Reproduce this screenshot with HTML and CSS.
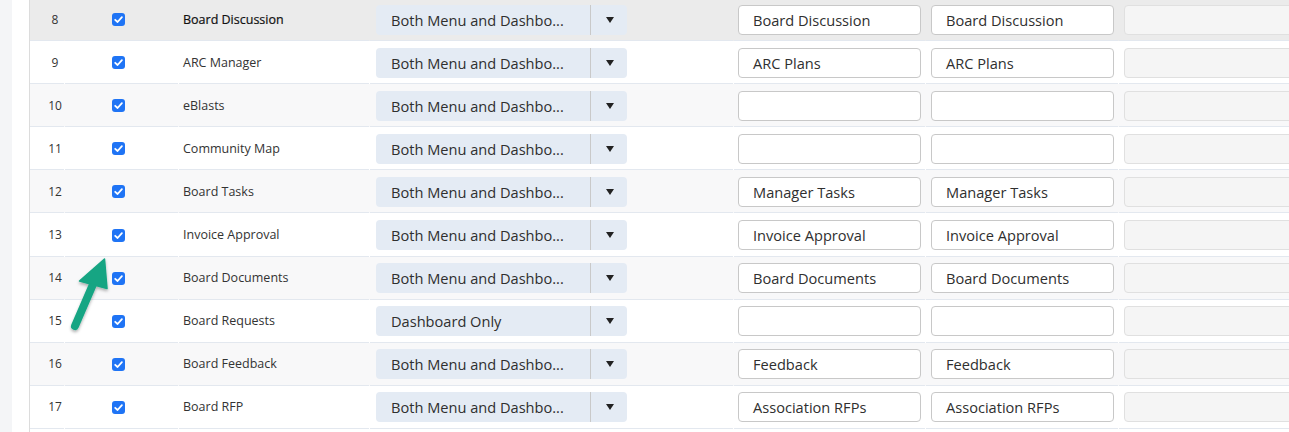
FILE: index.html
```html
<!DOCTYPE html>
<html>
<head>
<meta charset="utf-8">
<link rel="stylesheet" href="styles.css">
</head>
<body>
<div class="page">
  <aside class="side"></aside>
  <div class="gutter"></div>
  <main class="main">
    <div class="rows">
      <div class="row hover">
        <div class="c num">8</div>
        <div class="c chk"><span class="cb"><svg viewBox="0 0 13 13"><path d="M3.2 6.8 L5.6 9 L9.9 4.2"/></svg></span></div>
        <div class="c name strong">Board Discussion</div>
        <div class="c sel"><div class="select"><span class="stext">Both Menu and Dashbo...</span><span class="sbtn"><i class="tri"></i></span></div></div>
        <div class="c inp"><div class="field">Board Discussion</div></div>
        <div class="c inp"><div class="field">Board Discussion</div></div>
        <div class="c inp"><div class="field off"></div></div>
      </div>
      <div class="row">
        <div class="c num">9</div>
        <div class="c chk"><span class="cb"><svg viewBox="0 0 13 13"><path d="M3.2 6.8 L5.6 9 L9.9 4.2"/></svg></span></div>
        <div class="c name">ARC Manager</div>
        <div class="c sel"><div class="select"><span class="stext">Both Menu and Dashbo...</span><span class="sbtn"><i class="tri"></i></span></div></div>
        <div class="c inp"><div class="field">ARC Plans</div></div>
        <div class="c inp"><div class="field">ARC Plans</div></div>
        <div class="c inp"><div class="field off"></div></div>
      </div>
      <div class="row alt">
        <div class="c num">10</div>
        <div class="c chk"><span class="cb"><svg viewBox="0 0 13 13"><path d="M3.2 6.8 L5.6 9 L9.9 4.2"/></svg></span></div>
        <div class="c name">eBlasts</div>
        <div class="c sel"><div class="select"><span class="stext">Both Menu and Dashbo...</span><span class="sbtn"><i class="tri"></i></span></div></div>
        <div class="c inp"><div class="field"></div></div>
        <div class="c inp"><div class="field"></div></div>
        <div class="c inp"><div class="field off"></div></div>
      </div>
      <div class="row">
        <div class="c num">11</div>
        <div class="c chk"><span class="cb"><svg viewBox="0 0 13 13"><path d="M3.2 6.8 L5.6 9 L9.9 4.2"/></svg></span></div>
        <div class="c name">Community Map</div>
        <div class="c sel"><div class="select"><span class="stext">Both Menu and Dashbo...</span><span class="sbtn"><i class="tri"></i></span></div></div>
        <div class="c inp"><div class="field"></div></div>
        <div class="c inp"><div class="field"></div></div>
        <div class="c inp"><div class="field off"></div></div>
      </div>
      <div class="row alt">
        <div class="c num">12</div>
        <div class="c chk"><span class="cb"><svg viewBox="0 0 13 13"><path d="M3.2 6.8 L5.6 9 L9.9 4.2"/></svg></span></div>
        <div class="c name">Board Tasks</div>
        <div class="c sel"><div class="select"><span class="stext">Both Menu and Dashbo...</span><span class="sbtn"><i class="tri"></i></span></div></div>
        <div class="c inp"><div class="field">Manager Tasks</div></div>
        <div class="c inp"><div class="field">Manager Tasks</div></div>
        <div class="c inp"><div class="field off"></div></div>
      </div>
      <div class="row">
        <div class="c num">13</div>
        <div class="c chk"><span class="cb"><svg viewBox="0 0 13 13"><path d="M3.2 6.8 L5.6 9 L9.9 4.2"/></svg></span></div>
        <div class="c name">Invoice Approval</div>
        <div class="c sel"><div class="select"><span class="stext">Both Menu and Dashbo...</span><span class="sbtn"><i class="tri"></i></span></div></div>
        <div class="c inp"><div class="field">Invoice Approval</div></div>
        <div class="c inp"><div class="field">Invoice Approval</div></div>
        <div class="c inp"><div class="field off"></div></div>
      </div>
      <div class="row alt">
        <div class="c num">14</div>
        <div class="c chk"><span class="cb"><svg viewBox="0 0 13 13"><path d="M3.2 6.8 L5.6 9 L9.9 4.2"/></svg></span></div>
        <div class="c name">Board Documents</div>
        <div class="c sel"><div class="select"><span class="stext">Both Menu and Dashbo...</span><span class="sbtn"><i class="tri"></i></span></div></div>
        <div class="c inp"><div class="field">Board Documents</div></div>
        <div class="c inp"><div class="field">Board Documents</div></div>
        <div class="c inp"><div class="field off"></div></div>
      </div>
      <div class="row">
        <div class="c num">15</div>
        <div class="c chk"><span class="cb"><svg viewBox="0 0 13 13"><path d="M3.2 6.8 L5.6 9 L9.9 4.2"/></svg></span></div>
        <div class="c name">Board Requests</div>
        <div class="c sel"><div class="select"><span class="stext">Dashboard Only</span><span class="sbtn"><i class="tri"></i></span></div></div>
        <div class="c inp"><div class="field"></div></div>
        <div class="c inp"><div class="field"></div></div>
        <div class="c inp"><div class="field off"></div></div>
      </div>
      <div class="row alt">
        <div class="c num">16</div>
        <div class="c chk"><span class="cb"><svg viewBox="0 0 13 13"><path d="M3.2 6.8 L5.6 9 L9.9 4.2"/></svg></span></div>
        <div class="c name">Board Feedback</div>
        <div class="c sel"><div class="select"><span class="stext">Both Menu and Dashbo...</span><span class="sbtn"><i class="tri"></i></span></div></div>
        <div class="c inp"><div class="field">Feedback</div></div>
        <div class="c inp"><div class="field">Feedback</div></div>
        <div class="c inp"><div class="field off"></div></div>
      </div>
      <div class="row">
        <div class="c num">17</div>
        <div class="c chk"><span class="cb"><svg viewBox="0 0 13 13"><path d="M3.2 6.8 L5.6 9 L9.9 4.2"/></svg></span></div>
        <div class="c name">Board RFP</div>
        <div class="c sel"><div class="select"><span class="stext">Both Menu and Dashbo...</span><span class="sbtn"><i class="tri"></i></span></div></div>
        <div class="c inp"><div class="field">Association RFPs</div></div>
        <div class="c inp"><div class="field">Association RFPs</div></div>
        <div class="c inp"><div class="field off"></div></div>
      </div>
    </div>
  </main>
</div>
<svg class="pointer" width="70" height="100" viewBox="0 0 70 100">
  <defs>
    <filter id="sh" x="-30%" y="-30%" width="160%" height="160%">
      <feDropShadow dx="0" dy="2" stdDeviation="1.5" flood-color="#000" flood-opacity="0.3"/>
    </filter>
  </defs>
  <g filter="url(#sh)" fill="#15a583" stroke="#15a583">
    <line x1="15" y1="76" x2="34" y2="32" stroke-width="8" stroke-linecap="round"/>
    <polygon points="44.5,9 19.5,31 47,38.5" stroke-width="1.5" stroke-linejoin="round"/>
  </g>
</svg>
</body>
</html>
```

FILE: styles.css
```css
html, body {
  margin: 0;
  padding: 0;
  background: #ffffff;
  overflow: hidden;
  width: 1289px;
  height: 432px;
}

body {
  font-family: "Open Sans", "Noto Sans", "DejaVu Sans", sans-serif;
  color: #333333;
  position: relative;
}

.page {
  display: flex;
  height: 432px;
  overflow: hidden;
}

.side {
  flex: 0 0 12px;
  background: #f4f5f7;
}

.gutter {
  flex: 0 0 17px;
  background: #ffffff;
  border-right: 1px solid #dcdcdc;
}

.main {
  flex: 1 1 auto;
  min-width: 0;
  overflow: hidden;
}

.rows {
  margin-top: -2px;
}

.row {
  display: grid;
  grid-template-columns: 34px 113px 190px 363px 191px 192px 1fr;
  column-gap: 1px;
  height: 43.1px;
  background: #ffffff;
}

.row.alt {
  background: #f8f8f9;
}

.row.hover {
  background: #ebebeb;
}

.c {
  display: flex;
  align-items: center;
  border-bottom: 1px solid #e3e8ef;
  box-sizing: border-box;
  height: 43.1px;
  min-width: 0;
  overflow: hidden;
}

.num {
  justify-content: center;
  padding-left: 16px;
  font-size: 12px;
}

.chk {
  padding-left: 47px;
}

.cb {
  width: 13px;
  height: 13px;
  border-radius: 3px;
  background: #1f74f5;
  display: block;
  margin-top: 1px;
}

.cb svg {
  display: block;
  width: 13px;
  height: 13px;
  fill: none;
  stroke: #ffffff;
  stroke-width: 1.8;
  stroke-linecap: round;
  stroke-linejoin: round;
}

.name {
  padding-left: 4px;
  font-size: 12.5px;
  color: #333333;
}

.name.strong {
  color: #111111;
  font-weight: 500;
  -webkit-text-stroke: 0.2px #111111;
}

.sel {
  padding-left: 6px;
}

.select {
  width: 251px;
  flex: 0 0 251px;
  height: 30px;
  box-sizing: border-box;
  background: #e4ebf4;
  border-radius: 4px;
  display: flex;
  align-items: center;
  margin-top: 1px;
}

.stext {
  flex: 1;
  padding-left: 15px;
  font-size: 14.6px;
  color: #2f2f2f;
  white-space: nowrap;
  overflow: hidden;
}

.sbtn {
  flex: 0 0 36px;
  height: 30px;
  border-left: 1px solid #c9c9c9;
  display: flex;
  align-items: center;
  justify-content: center;
}

.tri {
  display: block;
  width: 0;
  height: 0;
  border-left: 4.5px solid transparent;
  border-right: 4.5px solid transparent;
  border-top: 6px solid #222222;
  margin-left: 1px;
}

.inp {
  padding-left: 4px;
}

.inp + .inp {
  padding-left: 5px;
}

.field {
  width: 183px;
  flex: 0 0 183px;
  height: 30px;
  box-sizing: border-box;
  border: 1px solid #c8c8c8;
  border-radius: 4px;
  background: #ffffff;
  font-size: 14.6px;
  color: #2f2f2f;
  padding-left: 14px;
  display: flex;
  align-items: center;
  white-space: nowrap;
  margin-top: 1px;
}

.field.off {
  width: 240px;
  flex: 0 0 240px;
  background: #f5f5f5;
  border-color: #e0e0e0;
}

.pointer {
  position: absolute;
  left: 60px;
  top: 250px;
}
```
